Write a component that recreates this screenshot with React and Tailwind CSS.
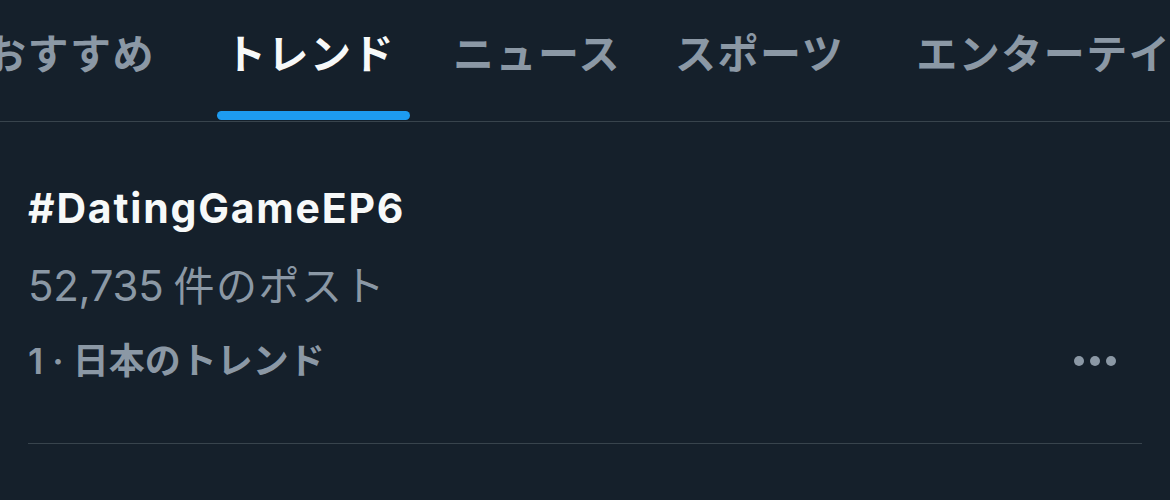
import React from 'react';

const tabs = [
  { label: 'おすすめ', ml: 'ml-[-15px]' },
  { label: 'トレンド', ml: 'ml-[70px]', active: true },
  { label: 'ニュース', ml: 'ml-[58px]' },
  { label: 'スポーツ', ml: 'ml-[54px]' },
  { label: 'エンターテインメント', ml: 'ml-[72px]' },
];

export default function App() {
  return (
    <div
      className="w-[1170px] h-[500px] overflow-hidden bg-[#15202b] text-[#f7f9f9]"
      style={{ fontFamily: 'Inter, "Noto Sans CJK JP", sans-serif' }}
    >
      {/* tab bar */}
      <div className="flex h-[122px] border-b border-[#38444d] overflow-hidden">
        {tabs.map((t) => (
          <div key={t.label} className={`${t.ml} shrink-0 flex flex-col`}>
            <div
              className={`pt-[32px] text-[41px] leading-[44px] font-bold tracking-[1.5px] whitespace-nowrap ${
                t.active ? 'text-[#f7f9f9]' : 'text-[#8b98a5]'
              }`}
            >
              {t.label}
            </div>
            {t.active && (
              <div className="mt-auto mb-[1px] ml-[-8px] mr-[-15px] h-[9px] rounded-full bg-[#1d9bf0]" />
            )}
          </div>
        ))}
      </div>

      {/* trend item */}
      <div className="mx-[28px] border-b border-[#38444d] h-[322px] pt-[62px]">
        <div className="text-[41px] leading-[48px] font-bold tracking-[1.8px]">#DatingGameEP6</div>
        <div className="mt-[30px] flex items-baseline text-[#8b98a5] leading-[48px]">
          <span className="text-[42px] tracking-[-0.3px]">52,735</span>
          <span className="ml-[10px] text-[41px] tracking-[1.5px]">件のポスト</span>
        </div>
        <div className="mt-[31px] flex items-center justify-between">
          <div className="text-[36px] leading-[40px] font-semibold text-[#8b98a5]">1 · 日本のトレンド</div>
          <div className="flex gap-[6px] mr-[26px]">
            <span className="w-[10px] h-[10px] rounded-full bg-[#8b98a5]" />
            <span className="w-[10px] h-[10px] rounded-full bg-[#8b98a5]" />
            <span className="w-[10px] h-[10px] rounded-full bg-[#8b98a5]" />
          </div>
        </div>
      </div>
    </div>
  );
}
